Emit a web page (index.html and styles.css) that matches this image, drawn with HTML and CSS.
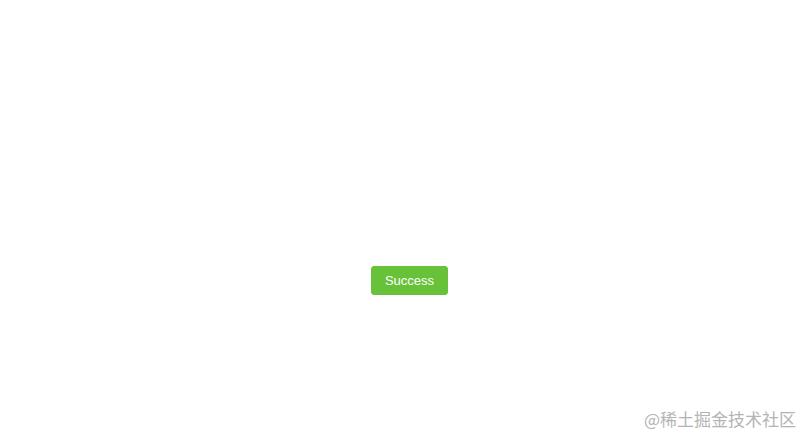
FILE: index.html
```html
<!DOCTYPE html>
<html lang="zh">
<head>
<meta charset="utf-8">
<link rel="stylesheet" href="styles.css">
</head>
<body>
<main class="stage">
  <button class="btn-success" type="button">Success</button>
</main>
<div class="watermark">@稀土掘金技术社区</div>
</body>
</html>
```
FILE: styles.css
```css
html, body {
  margin: 0;
  padding: 0;
  background: #ffffff;
  width: 800px;
  height: 435px;
  overflow: hidden;
}
.stage {
  display: flex;
  align-items: flex-start;
  padding: 266px 0 0 371px;
}
.btn-success {
  box-sizing: border-box;
  width: 77px;
  height: 29px;
  padding: 0;
  border: 1px solid #67c23a;
  border-radius: 3px;
  background: #67c23a;
  color: #ffffff;
  font-family: "Liberation Sans", Arial, sans-serif;
  font-size: 13px;
  line-height: 27px;
  text-align: center;
  cursor: pointer;
}
.watermark {
  position: absolute;
  right: 4px;
  top: 408px;
  color: #b4b4b4;
  font-family: "Noto Sans CJK SC", sans-serif;
  font-size: 17px;
  line-height: 22px;
  letter-spacing: 0;
}
```
